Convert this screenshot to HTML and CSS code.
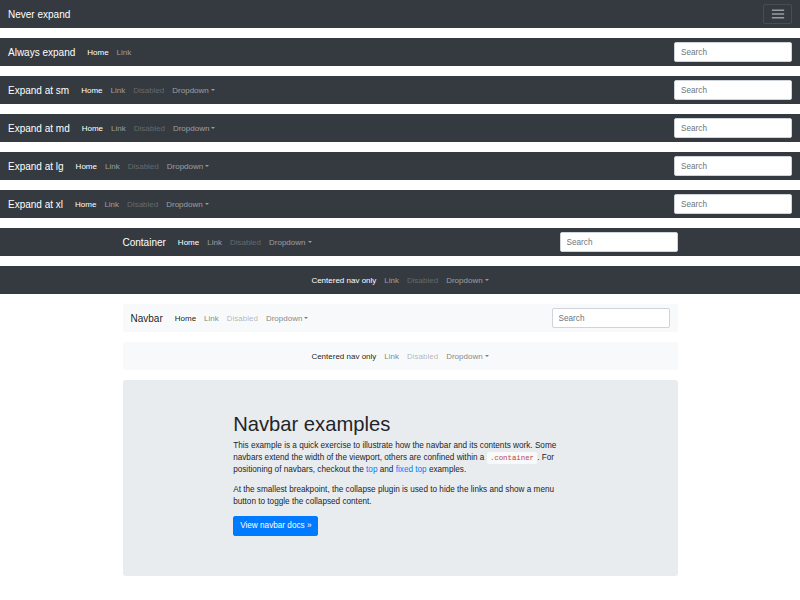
FILE: index.html
```html
<!DOCTYPE html>
<html lang="en">
<head>
<meta charset="utf-8">
<title>Navbar examples</title>
<link rel="stylesheet" href="styles.css">
</head>
<body>
<nav class="navbar dark">
  <a class="brand" href="#">Never expand</a>
  <button class="toggler" type="button" aria-label="Toggle navigation">
    <svg width="16" height="16" viewBox="0 0 30 30"><path d="M3.5 8h23M3.5 15h23M3.5 22h23" stroke="rgba(255,255,255,.5)" stroke-width="2.8"/></svg>
  </button>
</nav>

<nav class="navbar dark">
  <a class="brand" href="#">Always expand</a>
  <ul class="nav">
    <li><a class="link active" href="#">Home</a></li>
    <li><a class="link" href="#">Link</a></li>
  </ul>
  <input class="search" type="text" placeholder="Search">
</nav>

<nav class="navbar dark">
  <a class="brand" href="#">Expand at sm</a>
  <ul class="nav">
    <li><a class="link active" href="#">Home</a></li>
    <li><a class="link" href="#">Link</a></li>
    <li><a class="link disabled" href="#">Disabled</a></li>
    <li><a class="link caret" href="#">Dropdown</a></li>
  </ul>
  <input class="search" type="text" placeholder="Search">
</nav>

<nav class="navbar dark">
  <a class="brand" href="#">Expand at md</a>
  <ul class="nav">
    <li><a class="link active" href="#">Home</a></li>
    <li><a class="link" href="#">Link</a></li>
    <li><a class="link disabled" href="#">Disabled</a></li>
    <li><a class="link caret" href="#">Dropdown</a></li>
  </ul>
  <input class="search" type="text" placeholder="Search">
</nav>

<nav class="navbar dark">
  <a class="brand" href="#">Expand at lg</a>
  <ul class="nav">
    <li><a class="link active" href="#">Home</a></li>
    <li><a class="link" href="#">Link</a></li>
    <li><a class="link disabled" href="#">Disabled</a></li>
    <li><a class="link caret" href="#">Dropdown</a></li>
  </ul>
  <input class="search" type="text" placeholder="Search">
</nav>

<nav class="navbar dark">
  <a class="brand" href="#">Expand at xl</a>
  <ul class="nav">
    <li><a class="link active" href="#">Home</a></li>
    <li><a class="link" href="#">Link</a></li>
    <li><a class="link disabled" href="#">Disabled</a></li>
    <li><a class="link caret" href="#">Dropdown</a></li>
  </ul>
  <input class="search" type="text" placeholder="Search">
</nav>

<nav class="navbar dark">
  <div class="container bar-inner">
    <a class="brand" href="#">Container</a>
    <ul class="nav">
      <li><a class="link active" href="#">Home</a></li>
      <li><a class="link" href="#">Link</a></li>
      <li><a class="link disabled" href="#">Disabled</a></li>
      <li><a class="link caret" href="#">Dropdown</a></li>
    </ul>
    <input class="search" type="text" placeholder="Search">
  </div>
</nav>

<nav class="navbar dark">
  <ul class="nav center">
    <li><a class="link active" href="#">Centered nav only</a></li>
    <li><a class="link" href="#">Link</a></li>
    <li><a class="link disabled" href="#">Disabled</a></li>
    <li><a class="link caret" href="#">Dropdown</a></li>
  </ul>
</nav>

<div class="container">
  <nav class="navbar light">
    <a class="brand" href="#">Navbar</a>
    <ul class="nav">
      <li><a class="link active" href="#">Home</a></li>
      <li><a class="link" href="#">Link</a></li>
      <li><a class="link disabled" href="#">Disabled</a></li>
      <li><a class="link caret" href="#">Dropdown</a></li>
    </ul>
    <input class="search" type="text" placeholder="Search">
  </nav>

  <nav class="navbar light">
    <ul class="nav center">
      <li><a class="link active" href="#">Centered nav only</a></li>
      <li><a class="link" href="#">Link</a></li>
      <li><a class="link disabled" href="#">Disabled</a></li>
      <li><a class="link caret" href="#">Dropdown</a></li>
    </ul>
  </nav>

  <main class="jumbotron">
    <div class="col">
      <h1>Navbar examples</h1>
      <p>This example is a quick exercise to illustrate how the navbar and its contents work. Some navbars extend the width of the viewport, others are confined within a <code>.container</code>. For positioning of navbars, checkout the <a class="text-link" href="#">top</a> and <a class="text-link" href="#">fixed top</a> examples.</p>
      <p>At the smallest breakpoint, the collapse plugin is used to hide the links and show a menu button to toggle the collapsed content.</p>
      <p><a class="btn" href="#" role="button">View navbar docs &raquo;</a></p>
    </div>
  </main>
</div>
</body>
</html>
```
FILE: styles.css
```css
* { box-sizing: border-box; }

body {
  margin: 0;
  font-family: "Liberation Sans", Arial, Helvetica, sans-serif;
  font-size: 8px;
  line-height: 1.5;
  color: #212529;
  background: #fff;
}

.container {
  width: 555px;
  margin: 0 auto;
}

.navbar {
  display: flex;
  align-items: center;
  height: 28px;
  padding: 4px 8px;
  margin-bottom: 10px;
}

.navbar.dark { background: #343a40; }
.navbar.light { background: #f8f9fa; border-radius: 2px; }

.bar-inner {
  display: flex;
  align-items: center;
}

.brand {
  font-size: 10px;
  line-height: 15px;
  padding-top: 1px;
  margin-right: 8px;
  white-space: nowrap;
  text-decoration: none;
}
.dark .brand { color: #fff; }
.light .brand { color: rgba(0, 0, 0, .9); }

.nav {
  display: flex;
  list-style: none;
  margin: 0;
  padding: 0;
  flex: 1;
}
.nav.center { justify-content: center; }

.link {
  display: block;
  padding: 5px 4px 3px;
  line-height: 12px;
  text-decoration: none;
  white-space: nowrap;
}
.dark .link { color: rgba(255, 255, 255, .5); }
.dark .link.active { color: #fff; }
.dark .link.disabled { color: rgba(255, 255, 255, .25); }
.light .link { color: rgba(0, 0, 0, .5); }
.light .link.active { color: rgba(0, 0, 0, .9); }
.light .link.disabled { color: rgba(0, 0, 0, .3); }

.caret::after {
  content: "";
  display: inline-block;
  margin-left: 2px;
  vertical-align: 2px;
  border-top: 2.4px solid;
  border-right: 2.4px solid transparent;
  border-left: 2.4px solid transparent;
}

.search {
  width: 118px;
  height: 20px;
  margin: 0;
  padding: 3px 6px;
  font-family: "Liberation Sans", Arial, sans-serif;
  font-size: 8.2px;
  line-height: 12px;
  color: #495057;
  background: #fff;
  border: 1px solid #ced4da;
  border-radius: 2px;
}
.search::placeholder { color: #6c757d; opacity: 1; }

.toggler {
  margin-left: auto;
  width: 29px;
  height: 20px;
  padding: 0;
  display: flex;
  align-items: center;
  justify-content: center;
  background: transparent;
  border: 1px solid rgba(255, 255, 255, .1);
  border-radius: 2px;
}

.jumbotron {
  background: #e9ecef;
  border-radius: 2.4px;
  padding: 32px 16px;
  margin-bottom: 16px;
}

.col {
  width: 66.6667%;
  margin: 0 auto;
  padding: 0 7.5px;
}

h1 {
  font-size: 20.2px;
  font-weight: 500;
  line-height: 24px;
  margin: 0 0 4px;
}

p {
  margin: 0 0 8px;
  font-size: 8.2px;
  line-height: 12px;
}

code {
  font-family: "Liberation Mono", "DejaVu Sans Mono", monospace;
  font-size: 90%;
  padding: 1.6px 3.2px;
  color: #bd4147;
  background: #f8f9fa;
  border-radius: 2px;
}

.text-link {
  color: #007bff;
  text-decoration: none;
}

.btn {
  display: inline-block;
  padding: 3px 6px;
  font-size: 8.2px;
  line-height: 12px;
  color: #fff;
  background: #007bff;
  border: 1px solid #007bff;
  border-radius: 2px;
  text-decoration: none;
  vertical-align: middle;
}
```
